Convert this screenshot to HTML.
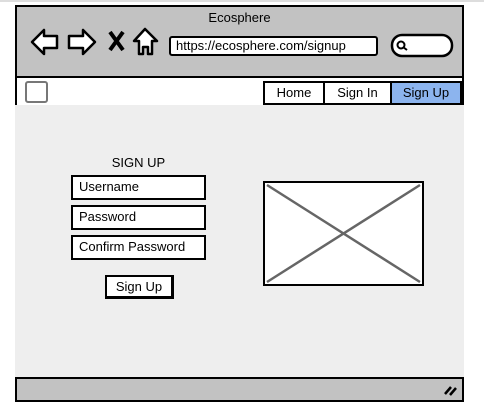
<!DOCTYPE html>
<html><head><style>
*{margin:0;padding:0;box-sizing:border-box}
body{width:484px;height:413px;background:#fff;position:relative;overflow:hidden;font-family:"Liberation Sans",sans-serif;color:#000}
.a{position:absolute}
.box{position:absolute;background:#fff;border:2px solid #000;font-size:13px;line-height:20px;padding-left:6px}
</style></head><body>
<div class="a" style="left:0;top:0;width:484px;height:2px;background:#ddd"></div>
<div class="a" style="left:15px;top:5px;width:449px;height:73px;background:#c2c2c2;border:2px solid #000"></div>
<div class="a" style="left:15px;top:10px;width:449px;text-align:center;font-size:13px">Ecosphere</div>
<svg class="a" style="left:0;top:0" width="484" height="80">
<path d="M32 42 L44 30 L44 36 L57 36 L57 48 L44 48 L44 54 Z" fill="#fff" stroke="#000" stroke-width="2.5" stroke-linejoin="round"/>
<path d="M95 42 L83 30 L83 36 L69 36 L69 48 L83 48 L83 54 Z" fill="#fff" stroke="#000" stroke-width="2.5" stroke-linejoin="round"/>
<path d="M110 32 L123 50 M123 32 L110 50" stroke="#000" stroke-width="4"/>
<path d="M145 29 L134 41 L139 41 L139 54 L143 54 L143 47 L148 47 L148 54 L152 54 L152 41 L157 41 Z" fill="#fff" stroke="#000" stroke-width="2.5" stroke-linejoin="round"/>
<rect x="170" y="37" width="207" height="18" rx="2" fill="#fff" stroke="#000" stroke-width="2"/>
<rect x="392" y="35" width="60" height="21" rx="10" fill="#fff" stroke="#000" stroke-width="2.5"/>
<circle cx="401" cy="45" r="3.5" fill="none" stroke="#000" stroke-width="2"/>
<path d="M403 47 L407 50" stroke="#000" stroke-width="2"/>
</svg>
<div class="a" style="left:176px;top:37px;font-size:13px;line-height:18px">https://ecosphere.com/signup</div>
<div class="a" style="left:15px;top:78px;width:449px;height:27px;background:#fff;border-left:2px solid #000;border-right:2px solid #000"></div>
<div class="a" style="left:25px;top:81px;width:23px;height:22px;border:2px solid #777;border-radius:3px;background:#fff"></div>
<div class="a" style="left:263px;top:81px;width:199px;height:24px;border:2px solid #000;display:flex;font-size:13px;line-height:20px;background:#fff">
<div style="width:60px;text-align:center;border-right:2px solid #000">Home</div>
<div style="width:67px;text-align:center;border-right:2px solid #000">Sign In</div>
<div style="flex:1;text-align:center;background:#8cb4ee">Sign Up</div>
</div>
<div class="a" style="left:15px;top:105px;width:449px;height:272px;background:#eeeeee"></div>
<div class="a" style="left:71px;top:155px;width:135px;text-align:center;font-size:13px">SIGN UP</div>
<div class="box" style="left:71px;top:175px;width:135px;height:25px">Username</div>
<div class="box" style="left:71px;top:205px;width:135px;height:25px">Password</div>
<div class="box" style="left:71px;top:235px;width:135px;height:25px">Confirm Password</div>
<div class="box" style="left:105px;top:275px;width:69px;height:24px;text-align:center;padding:0;border-right-width:3px;border-bottom-width:3px">Sign Up</div>
<svg class="a" style="left:263px;top:181px" width="161" height="105">
<rect x="1" y="1" width="159" height="103" fill="#fff" stroke="#000" stroke-width="2"/>
<path d="M4 4 L157 101 M157 4 L4 101" stroke="#666" stroke-width="2.5"/>
</svg>
<div class="a" style="left:15px;top:377px;width:449px;height:25px;background:#c2c2c2;border:2px solid #000"></div>
<svg class="a" style="left:440px;top:382px" width="20" height="16"><path d="M5 12 L11 5 M10 13 L16 6" stroke="#000" stroke-width="2.5"/></svg>
</body></html>
